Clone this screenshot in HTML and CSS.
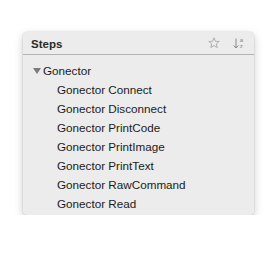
FILE: index.html
```html
<!DOCTYPE html>
<html>
<head>
<meta charset="utf-8">
<link rel="stylesheet" href="styles.css">
</head>
<body>
<div class="panel">
  <div class="header">
    <span class="title">Steps</span>
    <div class="tools">
      <svg class="star" width="12" height="12" viewBox="0 0 12 12">
        <path d="M6 0.8 L7.45 4.3 L11.2 4.5 L8.3 6.9 L9.25 10.6 L6 8.55 L2.75 10.6 L3.7 6.9 L0.8 4.5 L4.55 4.3 Z" fill="none" stroke="#a8a8a8" stroke-width="0.9" stroke-linejoin="round"/>
      </svg>
      <div class="sort">
        <svg class="arrow" width="6" height="11" viewBox="0 0 6 11">
          <path d="M3 0.5 V10 M0.6 7.4 L3 10 L5.4 7.4" fill="none" stroke="#8a8a8a" stroke-width="1"/>
        </svg>
        <div class="az"><span>a</span><span>z</span></div>
      </div>
    </div>
  </div>
  <div class="list">
    <div class="row group"><span class="tri"></span>Gonector</div>
    <div class="row child">Gonector Connect</div>
    <div class="row child">Gonector Disconnect</div>
    <div class="row child">Gonector PrintCode</div>
    <div class="row child">Gonector PrintImage</div>
    <div class="row child">Gonector PrintText</div>
    <div class="row child">Gonector RawCommand</div>
    <div class="row child">Gonector Read</div>
  </div>
</div>
</body>
</html>
```
FILE: styles.css
```css
html, body {
  margin: 0;
  padding: 0;
  background: #ffffff;
}
body {
  padding: 32px 0 0 23px;
  font-family: "Liberation Sans", Arial, sans-serif;
  color: #1b1b1b;
}
.panel {
  width: 231px;
  height: 183px;
  background: #ececec;
  border-radius: 4px;
  box-shadow: 0 3px 9px rgba(0, 0, 0, 0.22), 0 0 0 0.5px rgba(0, 0, 0, 0.08);
  box-sizing: border-box;
}
.header {
  height: 23px;
  border-bottom: 1px solid #b3b3b3;
  display: flex;
  align-items: center;
  justify-content: space-between;
  padding: 0 11px 0 8px;
  box-sizing: border-box;
}
.title {
  font-weight: bold;
  font-size: 11.5px;
  color: #2a2a2a;
  position: relative;
  top: 1px;
}
.tools {
  display: flex;
  align-items: center;
  gap: 13px;
}
.star {
  display: block;
}
.sort {
  display: flex;
  align-items: center;
  gap: 1px;
}
.arrow {
  display: block;
}
.az {
  display: flex;
  flex-direction: column;
  font-size: 6px;
  line-height: 6px;
  color: #8a8a8a;
  font-family: "Liberation Sans", Arial, sans-serif;
}
.list {
  padding-top: 6px;
}
.row {
  height: 19px;
  line-height: 19px;
  font-size: 11.7px;
  white-space: nowrap;
}
.group {
  display: flex;
  align-items: center;
  padding-left: 10px;
}
.tri {
  width: 0;
  height: 0;
  border-left: 4px solid transparent;
  border-right: 4px solid transparent;
  border-top: 6px solid #7b7b7b;
  margin-right: 2px;
}
.child {
  padding-left: 34px;
}
```
